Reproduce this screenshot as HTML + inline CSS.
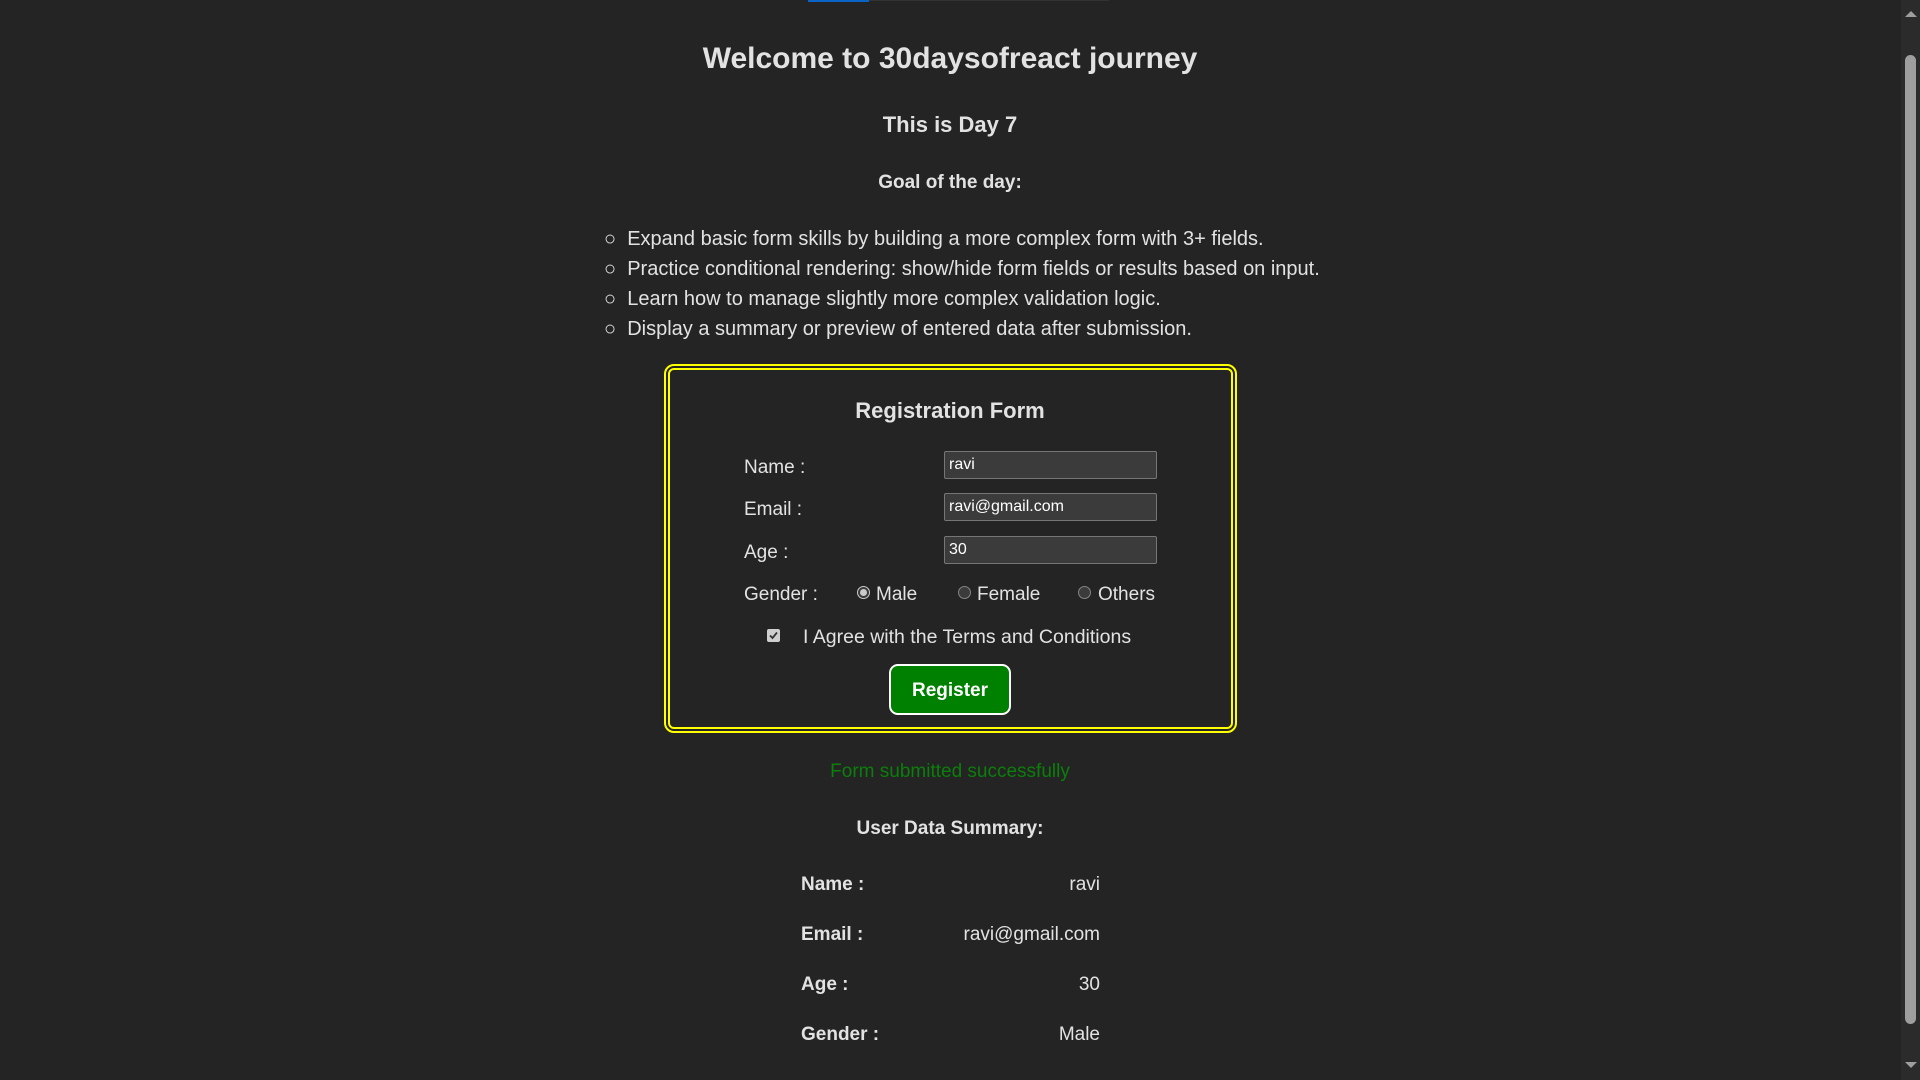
<!DOCTYPE html>
<html><head><meta charset="utf-8"><style>
html,body{margin:0;padding:0}
body{width:1920px;height:1080px;background:#242424;color:rgba(255,255,255,0.87);font-family:"Liberation Sans",sans-serif;position:relative;overflow:hidden}
.a{position:absolute;white-space:nowrap}
.c{left:0;width:1900px;text-align:center}
.b{font-weight:bold}
.t{font-size:19px;line-height:24px}
.inp{position:absolute;left:944px;height:28px;background:#3b3b3b;border:1px solid #767676;border-radius:2px;box-sizing:border-box;font-size:16px;line-height:26px;padding-left:4px;color:#fff;width:213px}
.radio{position:absolute;width:13px;height:13px;border-radius:50%;border:1px solid #858585;background:#3b3b3b;box-sizing:border-box}
</style></head><body>
<div class="a" style="left:808px;top:0;width:61px;height:2px;background:#0a64c8"></div>
<div class="a" style="left:869px;top:0;width:240px;height:1px;background:#333"></div>

<div class="a c b" style="top:41px;font-size:30px;line-height:36px">Welcome to 30daysofreact journey</div>
<div class="a c b" style="top:111px;font-size:22px;line-height:28px">This is Day 7</div>
<div class="a c b" style="top:171px;font-size:19px;line-height:24px">Goal of the day:</div>

<div class="a" style="left:604px;top:224px;line-height:30px;font-size:20px">
<div>○&nbsp; Expand basic form skills by building a more complex form with 3+ fields.</div>
<div>○&nbsp; Practice conditional rendering: show/hide form fields or results based on input.</div>
<div>○&nbsp; Learn how to manage slightly more complex validation logic.</div>
<div>○&nbsp; Display a summary or preview of entered data after submission.</div>
</div>

<div class="a" style="left:664px;top:364px;width:573px;height:369px;border:6px double #ffff00;border-radius:10px;box-sizing:border-box"></div>
<div class="a c b" style="top:397px;font-size:22px;line-height:28px">Registration Form</div>

<div class="a t" style="left:744px;top:456px">Name :</div>
<div class="a t" style="left:744px;top:498px">Email :</div>
<div class="a t" style="left:744px;top:541px">Age :</div>
<div class="a t" style="left:744px;top:583px">Gender :</div>
<div class="inp" style="top:451px">ravi</div>
<div class="inp" style="top:493px">ravi@gmail.com</div>
<div class="inp" style="top:536px">30</div>

<div class="radio" style="left:857px;top:586px;border-color:#ccc"><div style="position:absolute;left:2px;top:2px;width:7px;height:7px;border-radius:50%;background:#ccc"></div></div>
<div class="a t" style="left:876px;top:583px">Male</div>
<div class="radio" style="left:958px;top:586px"></div>
<div class="a t" style="left:977px;top:583px">Female</div>
<div class="radio" style="left:1078px;top:586px"></div>
<div class="a t" style="left:1098px;top:583px">Others</div>

<div class="a" style="left:767px;top:629px;width:13px;height:13px;background:#cfcfcf;border-radius:2px">
<svg width="13" height="13" viewBox="0 0 13 13"><path d="M3 6.5 L5.5 9 L10 3.5" stroke="#333" stroke-width="1.8" fill="none"/></svg></div>
<div class="a" style="left:803px;top:625px;font-size:19.5px;line-height:24px">I Agree with the Terms and Conditions</div>

<div class="a b" style="left:889px;top:664px;width:122px;height:51px;background:#008000;border:2px solid #fff;border-radius:9px;box-sizing:border-box;color:#fff;font-size:19px;line-height:49px;text-align:center">Register</div>

<div class="a c t" style="top:760px;color:#0a7f0a">Form submitted successfully</div>
<div class="a c b t" style="top:817px">User Data Summary:</div>

<div class="a b t" style="left:801px;top:873px">Name :</div>
<div class="a t" style="left:900px;width:200px;text-align:right;top:873px">ravi</div>
<div class="a b t" style="left:801px;top:923px">Email :</div>
<div class="a t" style="left:900px;width:200px;text-align:right;top:923px">ravi@gmail.com</div>
<div class="a b t" style="left:801px;top:973px">Age :</div>
<div class="a t" style="left:900px;width:200px;text-align:right;top:973px">30</div>
<div class="a b t" style="left:801px;top:1023px">Gender :</div>
<div class="a t" style="left:900px;width:200px;text-align:right;top:1023px">Male</div>

<div class="a" style="left:1901px;top:0;width:19px;height:1080px;background:#2b2b2b"></div>
<div class="a" style="left:1905px;top:11px;width:0;height:0;border-left:6px solid transparent;border-right:6px solid transparent;border-bottom:6px solid #9e9e9e"></div>
<div class="a" style="left:1905px;top:55px;width:11px;height:969px;background:#9e9e9e;border-radius:6px"></div>
<div class="a" style="left:1905px;top:1062px;width:0;height:0;border-left:6px solid transparent;border-right:6px solid transparent;border-top:6px solid #9e9e9e"></div>
</body></html>
